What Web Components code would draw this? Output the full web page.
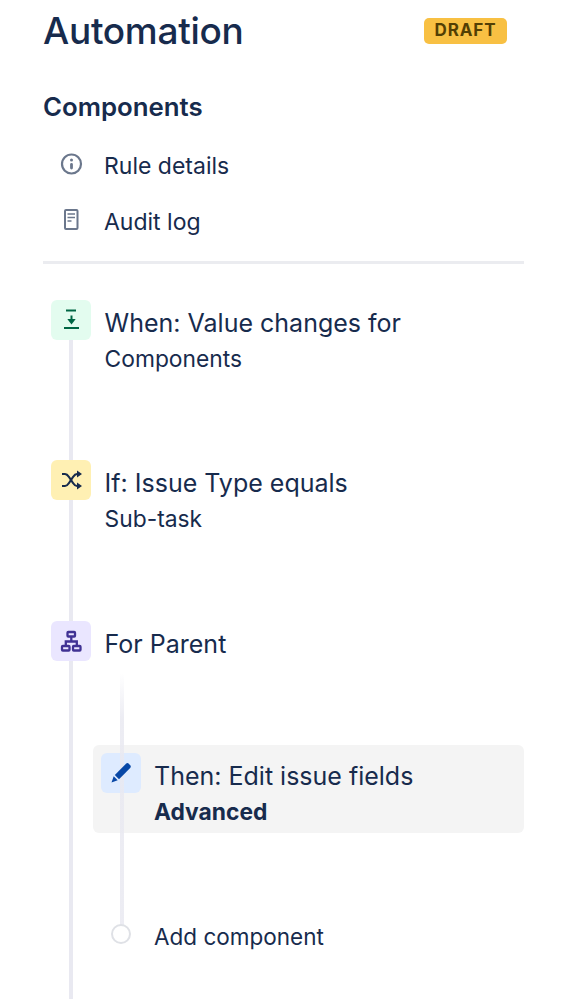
<!DOCTYPE html>
<html>
<head>
<meta charset="utf-8">
<style>
    html, body { margin: 0; background: #fff; }
    body {
        height: 999px;
        overflow: hidden;
        font-family: Inter, "Noto Sans", sans-serif;
        color: #172b4d;
    }
</style>
</head>
<body>
<rule-panel>
    <side-link label="Rule details">
        <svg viewBox="0 0 24 24" width="24" height="24" fill="none"><circle cx="12.500" cy="12" r="9.500" stroke="#6b778c" stroke-width="2.200"/><circle cx="12.500" cy="8" r="1.500" fill="#6b778c"/><rect x="11.100" y="11" width="2.800" height="6.500" rx="1.400" fill="#6b778c"/></svg>
    </side-link>
    <side-link label="Audit log">
        <svg viewBox="0 0 24 24" width="24" height="24" fill="none"><rect x="6" y="2" width="12.500" height="19" rx="1" stroke="#6b778c" stroke-width="2"/><path d="M8.500 6h7.500M8.500 9.500h7.500M8.500 13h4" stroke="#6b778c" stroke-width="1.700"/></svg>
    </side-link>
    <flow-step slot="flow" title="When: Value changes for" sub="Components" bg="#e3fcef" height="160">
        <svg viewBox="0 0 24 24" width="24" height="24" fill="none" stroke="#006644"><path d="M7 2.500h10M5 20h15" stroke-width="2"/><path d="M12.500 7.500v5" stroke-width="2"/><path d="M8.300 11 12.500 16.500l4.200-5.500z" fill="#006644" stroke="none"/></svg>
    </flow-step>
    <flow-step slot="flow" title="If: Issue Type equals" sub="Sub-task" bg="#fff0b3" height="161">
        <svg viewBox="0 0 24 24" width="24" height="24" fill="none" stroke="#172b4d" stroke-width="2.200"><path d="M3 6h3c2 0 3 1.500 4 3l4 6c1 1.500 2 3 4 3h2"/><path d="M3 18h3c2 0 3-1.500 4-3l4-6c1-1.500 2-3 4-3h2"/><path d="M18 2.500v7l5-3.500zM18 14.500v7l5-3.500z" fill="#172b4d" stroke="none"/></svg>
    </flow-step>
    <flow-step slot="flow" title="For Parent" bg="#eae6ff" height="378">
        <svg viewBox="0 0 24 24" width="24" height="24" fill="none" stroke="#403294" stroke-width="2.300"><rect x="8.500" y="3" width="7.500" height="4.500" rx=".8"/><rect x="3" y="17" width="7.500" height="4.500" rx=".8"/><rect x="14" y="17" width="7.500" height="4.500" rx=".8"/><path d="M12.300 7.500v5M6.800 17v-4.500h11V17"/></svg>
        <nested-flow slot="nested">
            <action-card title="Then: Edit issue fields" sub="Advanced">
                <svg viewBox="0 0 24 24" width="24" height="24"><path d="M17 2.800a2 2 0 0 1 2.800 0l1.400 1.400a2 2 0 0 1 0 2.800L10 18.200 5.800 14z" fill="#0747a6"/><path d="M4.700 15.300 8.700 19.300 2.500 21.500z" fill="#0747a6"/></svg>
            </action-card>
            <add-component label="Add component"></add-component>
        </nested-flow>
    </flow-step>
</rule-panel>

<script>
class RulePanel extends HTMLElement {
    constructor() {
        super();
        this.attachShadow({mode: "open"}).innerHTML = `
        <style>
            :host {
                display: block;
                padding: 0 61px 0 43px;
            }
            .head {
                display: flex;
                justify-content: space-between;
                align-items: center;
                height: 62px;
            }
            h1 {
                margin: 0;
                font-size: 37px;
                line-height: 40px;
                font-weight: 500;
                letter-spacing: -0.3px;
            }
            .badge {
                margin-right: 17px;
                padding: 0 10.500px;
                height: 26px;
                line-height: 25px;
                border-radius: 5px;
                background: #f8c043;
                color: #533f04;
                font-size: 17px;
                font-weight: 700;
                letter-spacing: 0.900px;
            }
            h2 {
                margin: 17px 0 0;
                font-size: 25.800px;
                line-height: 56px;
                font-weight: 600;
                height: 56px;
            }
            .links {
                padding-top: 3px;
                padding-left: 16px;
            }
            hr {
                margin: 11px 0 36px;
                border: 0;
                height: 3px;
                background: #ebecf0;
            }
            .flow {
                padding-left: 8px;
            }
        </style>
        <div class="head"><h1>Automation</h1><span class="badge">DRAFT</span></div>
        <h2>Components</h2>
        <div class="links"><slot></slot></div>
        <hr>
        <div class="flow"><slot name="flow"></slot></div>`;
    }
}

class SideLink extends HTMLElement {
    constructor() {
        super();
        this.attachShadow({mode: "open"}).innerHTML = `
        <style>
            :host {
                display: flex;
                align-items: center;
                gap: 21px;
                height: 56px;
                font-size: 23px;
            }
            .icon { display: flex; width: 24px; height: 24px; margin-top: -4px; }
        </style>
        <span class="icon"><slot></slot></span>
        <span>${this.getAttribute("label")}</span>`;
    }
}

class FlowStep extends HTMLElement {
    constructor() {
        super();
        this.attachShadow({mode: "open"}).innerHTML = `
        <style>
            :host {
                display: flex;
                gap: 13.600px;
                height: ${this.getAttribute("height")}px;
            }
            .rail {
                display: flex;
                flex-direction: column;
                align-items: center;
                flex: none;
                width: 40px;
            }
            .icon {
                display: flex;
                align-items: center;
                justify-content: center;
                flex: none;
                width: 40px;
                height: 40px;
                border-radius: 6px;
                background: ${this.getAttribute("bg")};
            }
            .line { flex: 1; width: 4px; background: #e9e9f1; }
            .body { flex: 1; min-width: 0; position: relative; }
            .title { font-size: 25px; line-height: 32px; margin-top: 7px; }
            .sub { font-size: 22.800px; line-height: 28px; margin-top: 5.500px; }
            .sub:empty { display: none; }
        </style>
        <div class="rail"><span class="icon"><slot></slot></span><span class="line"></span></div>
        <div class="body">
            <div class="title">${this.getAttribute("title")}</div>
            <div class="sub">${this.getAttribute("sub") || ""}</div>
            <slot name="nested"></slot>
        </div>`;
    }
}

class NestedFlow extends HTMLElement {
    constructor() {
        super();
        this.attachShadow({mode: "open"}).innerHTML = `
        <style>
            :host {
                display: block;
                margin-left: -11.600px;
                padding-top: 85px;
            }
            .guide {
                position: absolute;
                left: 15.400px;
                top: 52px;
                width: 4px;
                height: 252px;
                background: linear-gradient(#fff, #e9e9f1 45px);
                z-index: 1;
                opacity: .85;
            }
        </style>
        <span class="guide"></span>
        <slot></slot>`;
    }
}

class ActionCard extends HTMLElement {
    constructor() {
        super();
        this.attachShadow({mode: "open"}).innerHTML = `
        <style>
            :host {
                display: flex;
                gap: 13px;
                height: 88px;
                padding: 8px 8px 0;
                box-sizing: border-box;
                border-radius: 6px;
                background: #f4f4f4;
            }
            .icon {
                display: flex;
                align-items: center;
                justify-content: center;
                flex: none;
                width: 40px;
                height: 40px;
                border-radius: 6px;
                background: #deebff;
            }
            ::slotted(svg) { position: relative; z-index: 2; }
            .title { font-size: 25px; line-height: 32px; margin-top: 7px; }
            .sub { font-size: 22.800px; line-height: 28px; margin-top: 6px; font-weight: 700; }
        </style>
        <span class="icon"><slot></slot></span>
        <div>
            <div class="title">${this.getAttribute("title")}</div>
            <div class="sub">${this.getAttribute("sub")}</div>
        </div>`;
    }
}

class AddComponent extends HTMLElement {
    constructor() {
        super();
        this.attachShadow({mode: "open"}).innerHTML = `
        <style>
            :host {
                display: flex;
                align-items: center;
                gap: 23px;
                margin: 89px 0 0 18px;
                height: 28px;
                font-size: 22.500px;
                position: relative;
                z-index: 2;
            }
            .dot {
                flex: none;
                width: 20px;
                height: 20px;
                margin-top: -4px;
                box-sizing: border-box;
                border: 2px solid #dfe1e6;
                border-radius: 50%;
                background: #fff;
            }
        </style>
        <span class="dot"></span>
        <span>${this.getAttribute("label")}</span>`;
    }
}

customElements.define("rule-panel", RulePanel);
customElements.define("side-link", SideLink);
customElements.define("flow-step", FlowStep);
customElements.define("nested-flow", NestedFlow);
customElements.define("action-card", ActionCard);
customElements.define("add-component", AddComponent);
</script>
</body>
</html>
